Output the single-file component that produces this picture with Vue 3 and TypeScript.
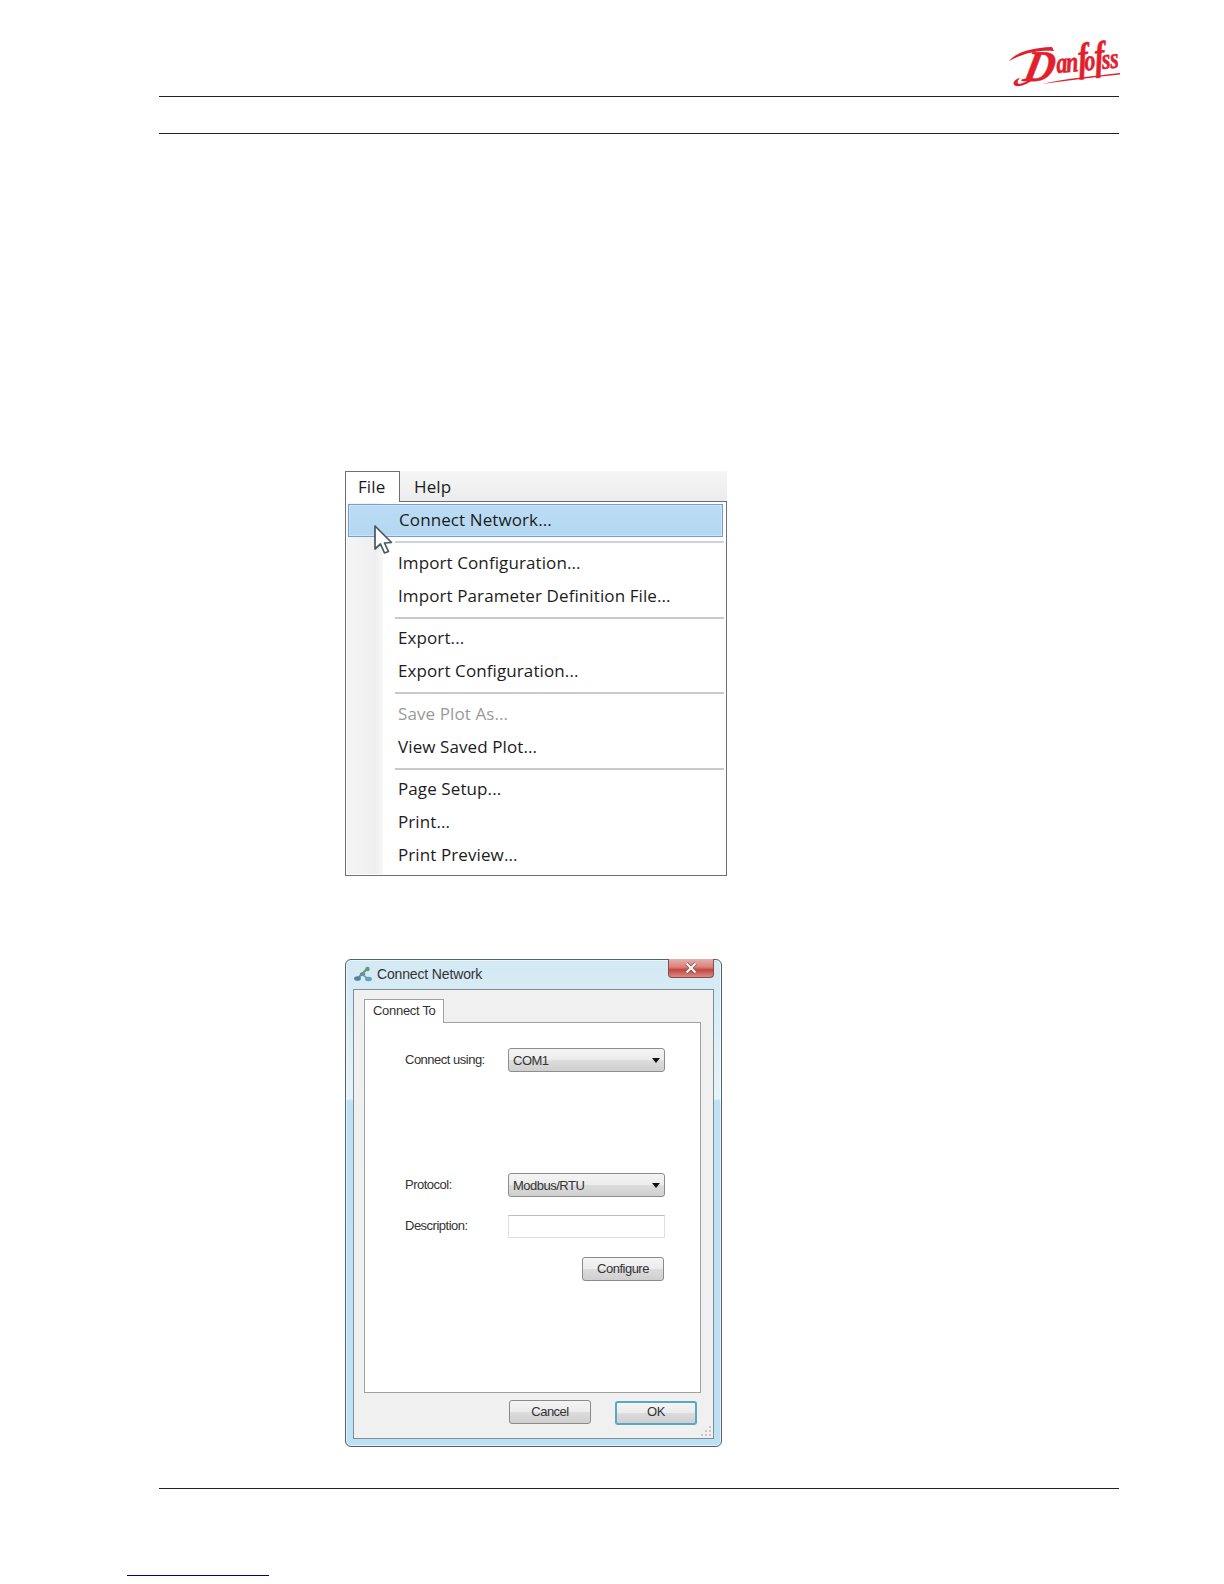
<script setup lang="ts">
type MenuItem = { label: string; disabled?: boolean; hover?: boolean }
const groups: MenuItem[][] = [
  [{ label: 'Connect Network...', hover: true }],
  [
    { label: 'Import Configuration...' },
    { label: 'Import Parameter Definition File...' },
  ],
  [
    { label: 'Export...' },
    { label: 'Export Configuration...' },
  ],
  [
    { label: 'Save Plot As...', disabled: true },
    { label: 'View Saved Plot...' },
  ],
  [
    { label: 'Page Setup...' },
    { label: 'Print...' },
    { label: 'Print Preview...' },
  ],
]
</script>

<template>
  <div class="page">
    <header class="head">
      <div class="logo-row">
        <svg class="logo" viewBox="0 0 116 48" width="116" height="48">
          <path d="M3 21 C10 13 22 8 46 7 L48 11 C32 10 18 13 3 21 Z" fill="#e2202c" />
          <text class="logo-text" transform="translate(16 41) skewX(-12) scale(0.95 1)"><tspan class="cap">D</tspan></text>
          <text class="logo-text" transform="translate(51 33) rotate(-5) scale(0.76 1)">
            <tspan class="low" x="0" y="0">a</tspan>
            <tspan class="low" x="13" y="0">n</tspan>
            <tspan class="tall" x="29" y="0">f</tspan>
            <tspan class="low" x="37" y="0">o</tspan>
            <tspan class="tall" x="51" y="0">f</tspan>
            <tspan class="low" x="60" y="0">s</tspan>
            <tspan class="low" x="71" y="0">s</tspan>
          </text>
          <path d="M10 46 C5 45 8 39 14 38 C11 41 11 43 13 44 C18 43 22 41 26 38 L28 39 C23 43 16 47 10 46 Z" fill="#e2202c" />
          <path d="M36 44 C60 38 90 36 114 33 L114 34.5 C90 37 60 41 36 44 Z" fill="#e2202c" />
        </svg>
      </div>
      <div class="rule first"></div>
      <div class="rule second"></div>
    </header>

    <section class="menu-shot">
      <div class="menubar">
        <div class="tab-file">File</div>
        <div class="tab-help">Help</div>
      </div>
      <div class="menu-body">
        <div class="gutter"></div>
        <template v-for="(group, g) in groups" :key="g">
          <div v-if="g > 0" class="sep" :class="{ 'sep-first': g === 1 }"></div>
          <div
            v-for="item in group"
            :key="item.label"
            class="item"
            :class="{ hover: item.hover, disabled: item.disabled }"
          >{{ item.label }}</div>
        </template>
        <svg class="cursor" viewBox="0 0 20 30" width="20" height="30">
          <path d="M2 1 L2 24 L7.5 19 L11.5 28 L15.5 26.5 L11.5 18 L18.5 17.5 Z" fill="#fff" stroke="#4a5560" stroke-width="1.7" stroke-linejoin="round" />
        </svg>
      </div>
    </section>

    <section class="dialog">
      <div class="titlebar">
        <svg class="net-icon" viewBox="0 0 18 16" width="18" height="16">
          <path d="M3.5 12.5 L13 3" stroke="#5f9a80" stroke-width="2.2" fill="none" />
          <path d="M8 8 L14 13" stroke="#7aa0b0" stroke-width="1.8" fill="none" />
          <circle cx="13.5" cy="3" r="2.2" fill="#5f9a72" />
          <ellipse cx="3.5" cy="12.5" rx="3.4" ry="2.3" fill="#4f86a8" />
          <ellipse cx="14.5" cy="13" rx="3.4" ry="2.2" fill="#62a2c4" />
          <ellipse cx="8.5" cy="8" rx="2.8" ry="1.8" fill="#6f8a98" />
        </svg>
        <span class="title">Connect Network</span>
        <div class="close">
          <svg viewBox="0 0 16 12" width="16" height="12">
            <path d="M3.5 1.5 L12.5 10.5 M12.5 1.5 L3.5 10.5" stroke="#6b4a4a" stroke-width="3.6" />
            <path d="M3.5 1.5 L12.5 10.5 M12.5 1.5 L3.5 10.5" stroke="#f4f4f4" stroke-width="2.4" />
          </svg>
        </div>
      </div>
      <div class="client">
        <div class="tabs">
          <div class="tab">Connect To</div>
        </div>
        <div class="panel">
          <div class="row row-com">
            <span class="label">Connect using:</span>
            <div class="select">COM1<i class="arrow"></i></div>
          </div>
          <div class="row row-protocol">
            <span class="label">Protocol:</span>
            <div class="select">Modbus/RTU<i class="arrow"></i></div>
          </div>
          <div class="row row-desc">
            <span class="label">Description:</span>
            <div class="input"></div>
          </div>
          <div class="configure-row">
            <div class="btn configure">Configure</div>
          </div>
        </div>
        <div class="actions">
          <div class="btn cancel">Cancel</div>
          <div class="btn ok">OK</div>
        </div>
        <svg class="grip" viewBox="0 0 12 12" width="12" height="12">
          <g fill="#c4c8cb">
            <rect x="9" y="1" width="2" height="2" />
            <rect x="5" y="5" width="2" height="2" />
            <rect x="9" y="5" width="2" height="2" />
            <rect x="1" y="9" width="2" height="2" />
            <rect x="5" y="9" width="2" height="2" />
            <rect x="9" y="9" width="2" height="2" />
          </g>
        </svg>
      </div>
    </section>

    <footer class="foot">
      <div class="rule"></div>
      <div class="link-line"></div>
    </footer>
  </div>
</template>

<style>
html, body { margin: 0; background: #fff; }
</style>

<style scoped>
.page {
  width: 1224px;
  height: 1584px;
  box-sizing: border-box;
  padding-top: 40px;
  background: #fff;
  font-family: "Open Sans", "Liberation Sans", sans-serif;
  overflow: hidden;
}
.head { margin-left: 159px; width: 960px; }
.logo-row { display: flex; justify-content: flex-end; height: 48px; }
.logo { display: block; margin-right: -3px; overflow: visible; }
.logo-text {
  font-family: "Liberation Serif", serif;
  font-style: italic;
  font-weight: 700;
  fill: #e2202c;
  stroke: #e2202c;
  stroke-width: 0.6px;
}
.cap { font-size: 44px; }
.low { font-size: 29px; }
.tall { font-size: 40px; }
.rule { height: 1px; background: #222; }
.first { margin-top: 8px; }
.second { margin-top: 36px; }

.menu-shot {
  margin: 337px 0 0 345px;
  width: 382px;
  height: 405px;
  box-sizing: border-box;
  font-family: "Open Sans", sans-serif;
  font-size: 17px;
  letter-spacing: 0.1px;
  color: #1c1c1c;
}
.menubar {
  height: 30px;
  display: flex;
  background: linear-gradient(#f6f6f6, #ececec);
  position: relative;
}
.tab-file {
  width: 55px;
  box-sizing: border-box;
  height: 31px;
  border: 1px solid #6f6f6f;
  border-bottom: 0;
  background: #fff;
  padding-left: 12px;
  line-height: 30px;
  position: relative;
  z-index: 1;
}
.tab-help { padding-left: 14px; line-height: 32px; }
.menu-body {
  position: relative;
  height: 375px;
  box-sizing: border-box;
  border: 1px solid #6f6f6f;
  background: #fff;
  padding: 2px 1px 0 2px;
}
.gutter {
  position: absolute;
  left: 1px;
  top: 1px;
  bottom: 1px;
  width: 36px;
  background: linear-gradient(90deg, #f4f4f4, #efefef 80%, #f8f8f8);
}
.item {
  position: relative;
  height: 33px;
  line-height: 31px;
  padding-left: 50px;
  box-sizing: border-box;
  white-space: nowrap;
}
.item.hover {
  line-height: 30px;
  margin-right: 2px;
  background: linear-gradient(#bcdcf4, #b4d7f1);
  border: 1px solid #6f9fd8;
  box-shadow: inset 0 0 0 1px rgba(255, 255, 255, 0.3);
}
.item.disabled { color: #9a9a9a; }
.sep {
  position: relative;
  margin: 4px 1px 3.6px 47px;
  height: 2px;
  background: #c9c9c9;
}
.sep-first { background: #cfd3d6; }
.cursor { position: absolute; left: 27px; top: 23px; }

.dialog {
  margin: 83px 0 0 345px;
  width: 377px;
  height: 488px;
  box-sizing: border-box;
  position: relative;
  border: 1px solid #4d6470;
  border-radius: 6px;
  padding: 0 7px 7px;
  display: flex;
  flex-direction: column;
  background: linear-gradient(#d3e9f3 0, #e6f3f8 28.5%, #bfe1f2 29%, #bde0f2 100%);
  box-shadow: inset 0 0 0 1px rgba(255, 255, 255, 0.6);
  color: #222;
  font-family: "Liberation Sans", sans-serif;
  font-size: 13px;
  letter-spacing: -0.3px;
}
.titlebar {
  height: 29px;
  flex: none;
  display: flex;
  align-items: center;
  padding-left: 1px;
  padding-bottom: 2px;
  box-sizing: border-box;
}
.net-icon { display: block; margin-right: 5px; }
.title { font-size: 14px; color: #333; letter-spacing: -0.15px; }
.close {
  position: absolute;
  right: 7px;
  top: -1px;
  width: 46px;
  height: 19px;
  box-sizing: border-box;
  border: 1px solid #8a4b4b;
  border-top: 0;
  border-radius: 0 0 4px 4px;
  background: linear-gradient(#e7b0ac, #d9807a 45%, #c4453e 60%, #d98c86);
  display: flex;
  align-items: center;
  justify-content: center;
}
.client {
  flex: 1;
  min-height: 0;
  position: relative;
  box-sizing: border-box;
  border: 1px solid #7e8e97;
  background: #f0f0f0;
  padding: 9px 12px 0 10px;
  display: flex;
  flex-direction: column;
}
.tabs { display: flex; height: 23px; flex: none; position: relative; z-index: 1; }
.tab {
  width: 80px;
  height: 24px;
  box-sizing: border-box;
  border: 1px solid #a0a0a0;
  border-bottom: 0;
  background: #fff;
  padding-left: 8px;
  line-height: 21px;
  color: #333;
}
.panel {
  height: 371px;
  flex: none;
  box-sizing: border-box;
  border: 1px solid #a0a0a0;
  background: #fff;
  padding: 0 24px 0 40px;
}
.row { display: flex; align-items: center; height: 24px; }
.row-com { margin-top: 25px; }
.row-protocol { margin-top: 101px; }
.row-desc { margin-top: 17px; }
.label { width: 103px; flex: none; color: #333; margin-top: -2px; letter-spacing: -0.5px; }
.select {
  width: 157px;
  height: 24px;
  box-sizing: border-box;
  border: 1px solid #8d8d8d;
  border-radius: 3px;
  background: linear-gradient(#f4f4f4 0, #ececec 48%, #dcdcdc 52%, #cfcfcf 100%);
  padding-left: 4px;
  line-height: 23px;
  position: relative;
  color: #333;
  letter-spacing: -0.5px;
}
.arrow {
  position: absolute;
  right: 4px;
  top: 9px;
  border: 4px solid transparent;
  border-top: 5px solid #111;
  border-bottom: 0;
}
.input {
  width: 157px;
  height: 23px;
  box-sizing: border-box;
  border: 1px solid #dfdfdf;
  border-top-color: #bdbdbd;
  background: #fff;
}
.configure-row { display: flex; justify-content: flex-end; margin-top: 19px; padding-right: 12px; }
.btn {
  box-sizing: border-box;
  height: 24px;
  border: 1px solid #8a8a8a;
  border-radius: 3px;
  background: linear-gradient(#f4f4f4 0, #ececec 48%, #dcdcdc 52%, #cfcfcf 100%);
  text-align: center;
  line-height: 22px;
  color: #333;
  letter-spacing: -0.5px;
}
.configure { width: 82px; }
.actions {
  display: flex;
  justify-content: flex-end;
  gap: 24px;
  padding-top: 7px;
  margin-right: 4px;
}
.cancel { width: 82px; }
.ok {
  width: 82px;
  border: 2px solid #58a8c4;
  line-height: 18px;
  margin-top: 1px;
}
.grip { position: absolute; right: 1px; bottom: 1px; }

.foot { margin: 41px 0 0 159px; width: 960px; }
.link-line {
  width: 142px;
  height: 1px;
  margin: 86px 0 0 -32px;
  background: #00008b;
}
</style>
